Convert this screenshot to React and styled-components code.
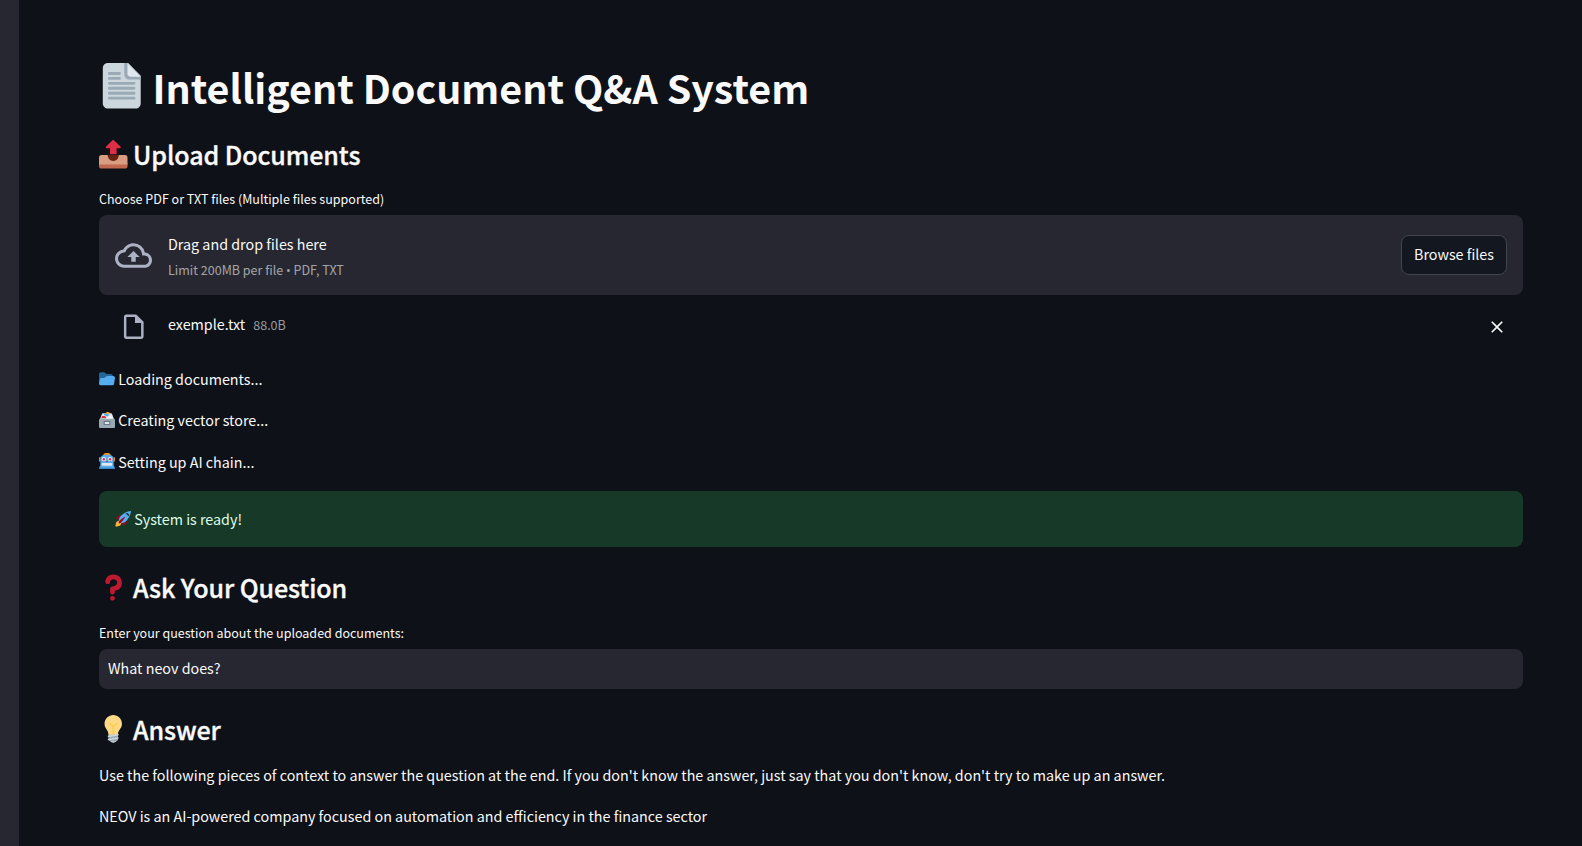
import React from "react";
import styled, { createGlobalStyle } from "styled-components";

const GlobalStyle = createGlobalStyle`
  *, *::before, *::after { box-sizing: border-box; }
  body {
    margin: 0;
    background: #0e1117;
    color: #fafafa;
    font-family: "Noto Sans CJK SC", "Noto Sans", sans-serif;
    font-size: 14.32px;
    line-height: 25.6px;
    overflow: hidden;
  }
`;

const Page = styled.div`
  display: flex;
  height: 846px;
  overflow: hidden;
`;

const SidebarEdge = styled.aside`
  flex: 0 0 19px;
  background: #262730;
`;

const Main = styled.main`
  flex: 1;
  min-width: 0;
  display: flex;
  flex-direction: column;
  padding: 59px 59px 0 80px;
`;

const Title = styled.h1`
  display: flex;
  gap: 8px;
  margin: 0;
  font-size: 39.4px;
  font-weight: 700;
  line-height: 55px;
`;

const Heading = styled.h2`
  display: flex;
  gap: 5.5px;
  margin: ${(p) => p.$top}px 0 0;
  font-size: 25.06px;
  font-weight: 500;
  line-height: 34px;
  letter-spacing: -0.1px;
  -webkit-text-stroke: 0.35px currentColor;
`;

const Emoji = styled.svg`
  flex: none;
  width: ${(p) => p.$size}px;
  height: ${(p) => p.$size}px;
  margin-top: ${(p) => p.$top}px;
`;

const Label = styled.label`
  display: block;
  margin: ${(p) => p.$top}px 0 6px;
  font-size: 12.53px;
  line-height: 20px;
`;

const Dropzone = styled.section`
  display: flex;
  align-items: center;
  height: 80px;
  padding: 0 16px;
  border-radius: 8px;
  background: #262730;
`;

const IconSlot = styled.span`
  display: flex;
  justify-content: center;
  flex: 0 0 37px;
  margin-right: 16px;
  color: #acb1c3;
`;

const Instructions = styled.div`
  flex: 1;
  display: flex;
  flex-direction: column;
  gap: 3px;
  padding-top: 1.5px;
`;

const Muted = styled.small`
  font-size: 12.53px;
  line-height: 20px;
  color: rgba(250, 250, 250, 0.6);
`;

const Bullet = styled.span`
  font-family: "Open Sans", "Noto Sans", sans-serif;
`;

const BrowseButton = styled.button`
  width: 106px;
  height: 40px;
  padding: 0 0 2px;
  border: 1px solid #41444c;
  border-radius: 8px;
  background: #131720;
  color: inherit;
  font: inherit;
`;

const FileRow = styled.div`
  display: flex;
  align-items: center;
  height: 63px;
  margin-bottom: 8px;
  padding: 0 16px;
`;

const FileInfo = styled.div`
  flex: 1;
  display: flex;
  align-items: baseline;
  gap: 8px;
  padding-bottom: 6px;
`;

const RemoveButton = styled.button`
  display: flex;
  padding: 0;
  border: 0;
  background: none;
  color: inherit;
`;

const StatusList = styled.div`
  display: flex;
  flex-direction: column;
  gap: 15.8px;
`;

const StatusLine = styled.p`
  display: flex;
  gap: 3.2px;
  margin: 0;
`;

const Success = styled.div`
  display: flex;
  align-items: center;
  height: 56px;
  margin-top: 16.4px;
  padding: 0 16px;
  border-radius: 8px;
  background: #173928;
  color: #dffde9;
`;

const QuestionInput = styled.input`
  width: 100%;
  height: 40px;
  padding: 0 9px 2px;
  border: 0;
  border-radius: 8px;
  background: #262730;
  color: inherit;
  font: inherit;
`;

const Answer = styled.div`
  display: flex;
  flex-direction: column;
  gap: 16px;
  margin-top: 16px;
`;

const Paragraph = styled.p`
  margin: 0;
  white-space: nowrap;
`;

const Glyph = ({ size, top, children }) => (
  <Emoji viewBox="0 0 36 36" $size={size} $top={top} aria-hidden="true">
    {children}
  </Emoji>
);

const PageEmoji = () => (
  <Glyph size={45.5} top={4}>
    <path fill="#CCD6DD" d="M23 0H7C4.800 0 3 1.800 3 4v28c0 2.200 1.800 4 4 4h22c2.200 0 4-1.800 4-4V10z" />
    <path fill="#99AAB5" d="M20 0h3l10 10.500v2.500h-9c-2.200 0-4-1.800-4-4z" />
    <path fill="#E1E8ED" d="M22.500 0L33 10.800h-8.500c-1.100 0-2-.9-2-2z" />
    <path
      stroke="#99AAB5"
      strokeWidth="2.300"
      strokeLinecap="round"
      d="M8.200 8.300h8M8.200 12.200h8M8.200 16.100h19.500M8.200 20h19.500M8.200 23.900h19.500M8.200 27.800h19.500"
    />
  </Glyph>
);

const OutboxEmoji = () => (
  <Glyph size={28.5} top={3}>
    <path fill="#C1694F" d="M0 29h36v4c0 1.700-1.300 3-3 3H3c-1.700 0-3-1.300-3-3z" />
    <path fill="#D99E82" d="M3 19h30c1.700 0 3 1.300 3 3v9H0v-9c0-1.700 1.300-3 3-3z" />
    <path fill="#662113" d="M11 19h14c0 4-3 7.500-7 7.500S11 23 11 19z" />
    <path fill="#DD2E44" d="M27 8.200L18.900.4a1.300 1.300 0 0 0-1.800 0L9 8.200c-.9.900-.4 2.300.9 2.300H13.800V18h8.400v-7.500h3.900c1.300 0 1.800-1.400.9-2.300z" />
  </Glyph>
);

const FolderEmoji = () => (
  <Glyph size={16} top={4.5}>
    <path fill="#269" d="M0 29V7c0-2.200 1.800-4 4-4h7c3 0 4 4 7 4h9c2.200 0 4 1.800 4 4v18z" />
    <path fill="#55ACEE" d="M30 32H4c-2.200 0-4-1.800-4-4l2-9c.5-2.200 1.800-3 4-3h3c5 0 6-5 11-5h12c2.200 0 4 1.800 4 4l-2 13c-.3 2.200-1.800 4-4 4z" />
  </Glyph>
);

const CardBoxEmoji = () => (
  <Glyph size={16} top={4.5}>
    <path fill="#E1E8ED" d="M2 17L6 6c.8-2 2-3 4-3h16c2 0 3 1 4 3l4 11z" />
    <path fill="#FFAC33" d="M15 4c0-2.500 2-4 5-4s5 2 5 5z" />
    <path fill="#55ACEE" d="M11 4h8l4 3-4 3-8-3z" />
    <path fill="#DD2E44" d="M7 9h6l3 2v3H5z" />
    <path fill="#F5F8FA" d="M15 15l11-7 6 8H15z" />
    <path fill="#99AAB5" d="M0 19c0-3 1-4 3-4h30c2 0 3 1 3 4v14c0 2-1 3-3 3H3c-2 0-3-1-3-3z" />
    <path fill="#66757F" d="M10.500 20h15v9h-15z" />
    <path fill="#E1E8ED" d="M13 22.500h10v4.500H13z" />
  </Glyph>
);

const RobotEmoji = () => (
  <Glyph size={16} top={4.5}>
    <path fill="#F4900C" d="M10 3c1-2 4-3 8-3s7 1 8 3v3H10zM0 12c0-3 2-3 3-3v11c-2 0-3-1-3-4zM36 12c0-3-2-3-3-3v11c2 0 3-1 3-4z" />
    <path fill="#55ACEE" d="M3 14C3 7 8 4 18 4s15 3 15 10v13H3z" />
    <path fill="#3B88C3" d="M0 36c0-4 1-6 4-9h28c3 3 4 5 4 9z" />
    <path fill="#55ACEE" d="M4 26h28l2 7H2z" />
    <circle fill="#F5F8FA" cx="11" cy="14" r="4.800" />
    <circle fill="#F5F8FA" cx="25" cy="14" r="4.800" />
    <circle fill="#DD2E44" cx="11" cy="14" r="2.800" />
    <circle fill="#DD2E44" cx="25" cy="14" r="2.800" />
    <path fill="#BE1931" d="M16 20l2-3 2 3z" />
    <path fill="#E1E8ED" d="M8 22.500h20c1.500 0 2 1 2 3s-.5 3-2 3H8c-1.500 0-2-1-2-3s.5-3 2-3z" />
  </Glyph>
);

const RocketEmoji = () => (
  <Glyph size={16} top={5}>
    <path fill="#A0041E" d="M1 17l8-7 16 1 1 16-7 8s.001-5.999-6-12-12-6-12-6z" />
    <path fill="#FFAC33" d="M.973 35s-.036-7.979 2.985-11S15 21.187 15 21.187 14.999 29 11.999 32c-3 3-11.026 3-11.026 3z" />
    <circle fill="#FFCC4D" cx="9" cy="27" r="4" />
    <path fill="#55ACEE" d="M35.999 0s-10 0-22 10c-6 5-6 14-4 16s11 2 16-4c10-12 10-22 10-22z" />
    <path d="M26.999 5c-1.623 0-3.013.971-3.641 2.360.502-.227 1.055-.36 1.641-.36 2.209 0 4 1.791 4 4 0 .586-.133 1.139-.359 1.640 1.389-.627 2.359-2.017 2.359-3.640 0-2.209-1.791-4-4-4z" />
    <path fill="#A0041E" d="M8 28s0-4 1-5 13.001-10.999 14-10-9.001 13-10.001 14S8 28 8 28z" />
  </Glyph>
);

const QuestionEmoji = () => (
  <Glyph size={28.5} top={3}>
    <path fill="#BE1931" d="M17 27c-1.657 0-3-1.343-3-3v-4c0-1.657 1.343-3 3-3 .603-.006 6-1 6-5 0-2-2-4-5-4-2.441 0-4 2-4 3 0 1.657-1.343 3-3 3s-3-1.343-3-3c0-4.878 4.580-9 10-9 8 0 11 5.982 11 11 0 4.145-2.277 7.313-6.413 8.920-.9.351-1.790.587-2.587.747V24c0 1.657-1.343 3-3 3z" />
    <circle fill="#BE1931" cx="17" cy="32" r="3" />
  </Glyph>
);

const BulbEmoji = () => (
  <Glyph size={28.5} top={3}>
    <path fill="#FFD983" d="M29 11.060c0 6.439-5 7.439-5 13.440 0 3.098-3.123 3.359-5.500 3.359-2.053 0-6.586-.779-6.586-3.361C11.914 18.500 7 17.500 7 11.060 7 5.029 12.285.14 18.083.14 23.883.14 29 5.029 29 11.060z" />
    <path fill="#CCD6DD" d="M22.167 32.500c0 .828-2.234 2.500-4.167 2.500-1.933 0-4.167-1.672-4.167-2.500 0-.828 2.233-.5 4.167-.5 1.933 0 4.167-.328 4.167.5z" />
    <path fill="#FFCC4D" d="M22.707 10.293c-.391-.391-1.023-.391-1.414 0L18 13.586l-3.293-3.293c-.391-.391-1.023-.391-1.414 0s-.391 1.023 0 1.414L17 15.414V26c0 .553.447 1 1 1s1-.447 1-1V15.414l3.707-3.707c.391-.391.391-1.023 0-1.414z" />
    <path fill="#99AAB5" d="M24 31c0 1.104-.896 2-2 2h-8c-1.104 0-2-.896-2-2v-6h12v6z" />
    <path stroke="#CCD6DD" strokeWidth="2" strokeLinecap="round" d="M12 31l12-2M12 27l12-2" />
  </Glyph>
);

const CloudUploadIcon = () => (
  <svg width="37" height="37" viewBox="0 0 24 24" fill="currentColor" aria-hidden="true">
    <path d="M19.350 10.040A7.490 7.490 0 0 0 12 4C9.110 4 6.600 5.640 5.350 8.040A5.994 5.994 0 0 0 0 14c0 3.310 2.690 6 6 6h13c2.760 0 5-2.240 5-5 0-2.640-2.050-4.780-4.650-4.960zM19 18H6c-2.210 0-4-1.790-4-4 0-2.050 1.530-3.760 3.560-3.970l1.070-.11.5-.95A5.469 5.469 0 0 1 12 6c2.620 0 4.880 1.860 5.390 4.430l.3 1.500 1.530.11A2.980 2.980 0 0 1 22 15c0 1.650-1.350 3-3 3zM8 13h2.550v3h2.900v-3H16l-4-4z" />
  </svg>
);

const FileIcon = () => (
  <svg width="29.500" height="29.500" viewBox="0 0 24 24" fill="currentColor" aria-hidden="true">
    <path d="M14 2H6c-1.100 0-1.990.9-1.990 2L4 20c0 1.100.89 2 1.990 2H18c1.100 0 2-.9 2-2V8l-6-6zM6 20V4h7v5h5v11H6z" />
  </svg>
);

const CloseIcon = () => (
  <svg width="20" height="20" viewBox="0 0 24 24" fill="currentColor" aria-hidden="true">
    <path d="M19 6.410L17.590 5 12 10.590 6.410 5 5 6.410 10.590 12 5 17.590 6.410 19 12 13.410 17.590 19 19 17.590 13.410 12z" />
  </svg>
);

export default function App() {
  return (
    <Page>
      <GlobalStyle />
      <SidebarEdge />
      <Main>
        <Title><PageEmoji />Intelligent Document Q&amp;A System</Title>

        <Heading $top={23}><OutboxEmoji />Upload Documents</Heading>
        <Label $top={18}>Choose PDF or TXT files (Multiple files supported)</Label>
        <Dropzone>
          <IconSlot><CloudUploadIcon /></IconSlot>
          <Instructions>
            <span>Drag and drop files here</span>
            <Muted>Limit 200MB per file <Bullet>•</Bullet> PDF, TXT</Muted>
          </Instructions>
          <BrowseButton type="button">Browse files</BrowseButton>
        </Dropzone>
        <FileRow>
          <IconSlot><FileIcon /></IconSlot>
          <FileInfo>
            <span>exemple.txt</span>
            <Muted>88.0B</Muted>
          </FileInfo>
          <RemoveButton type="button" aria-label="Remove file"><CloseIcon /></RemoveButton>
        </FileRow>

        <StatusList>
          <StatusLine><FolderEmoji />Loading documents...</StatusLine>
          <StatusLine><CardBoxEmoji />Creating vector store...</StatusLine>
          <StatusLine><RobotEmoji />Setting up AI chain...</StatusLine>
        </StatusList>
        <Success>
          <StatusLine><RocketEmoji />System is ready!</StatusLine>
        </Success>

        <Heading $top={23}><QuestionEmoji />Ask Your Question</Heading>
        <Label $top={19} htmlFor="question">Enter your question about the uploaded documents:</Label>
        <QuestionInput id="question" defaultValue="What neov does?" />

        <Heading $top={23}><BulbEmoji />Answer</Heading>
        <Answer>
          <Paragraph>
            Use the following pieces of context to answer the question at the end. If you don't know the answer, just say that you don't know, don't try to make up an answer.
          </Paragraph>
          <Paragraph>NEOV is an AI-powered company focused on automation and efficiency in the finance sector</Paragraph>
        </Answer>
      </Main>
    </Page>
  );
}
